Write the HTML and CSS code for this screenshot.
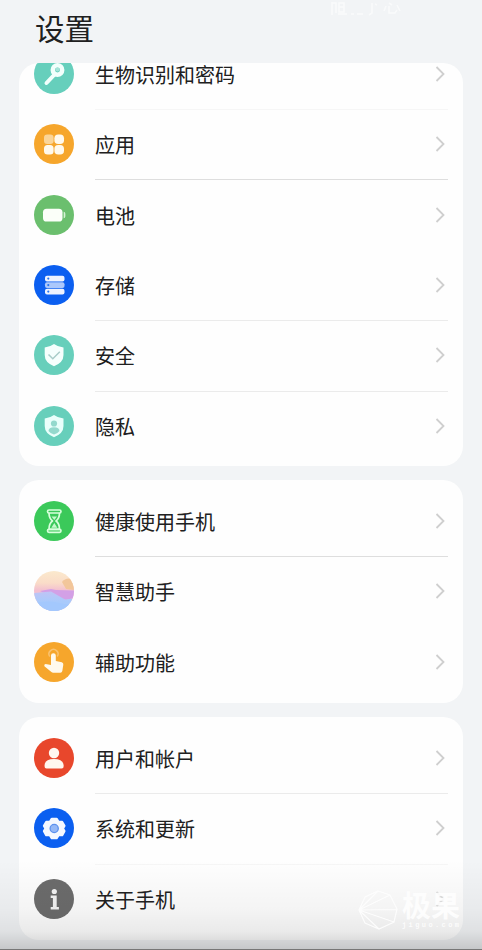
FILE: index.html
```html
<!DOCTYPE html>
<html lang="zh-CN">
<head>
<meta charset="utf-8">
<title>设置</title>
<link rel="stylesheet" href="styles.css">
</head>
<body>
<div class="screen">
  <svg class="status" viewBox="0 0 72 16" fill="none" stroke="#fff" stroke-width="1.6"><path d="M2 2v13M2 3h4v10M9 3h5v9H9zM9 7h5M8 14h9M21 14h3M27 14h6M42 3v10l-3 2M45 4l2 1M56 6l-2 5M59 3l3 2M59 6v7h6l2-3M67 5l3 6"/></svg>
  <h1 class="title">设置</h1>
  <main class="list">
    <section class="card card-clipped">
      <div class="row">
        <svg class="icon" viewBox="0 0 40 40"><circle cx="20" cy="20" r="20" fill="#66cfbc"/><path d="M21 20L12.500 29" stroke="#f2fffc" stroke-width="4" stroke-linecap="round"/><circle cx="23.500" cy="16" r="4.700" fill="#66cfbc" stroke="#f2fffc" stroke-width="4.500"/><circle cx="23.500" cy="15.500" r="2" fill="#a5e3d8"/></svg>
        <div class="body line-faint"><span>生物识别和密码</span><svg class="chevron" viewBox="0 0 10 18"><path d="M1.500 2L8.500 9L1.500 16"/></svg></div>
      </div>
      <div class="row">
        <svg class="icon" viewBox="0 0 40 40"><circle cx="20" cy="20" r="20" fill="#f6a62c"/><rect x="10" y="10.500" width="9.600" height="9.500" rx="3.300" fill="#fbd598"/><g fill="#fff9ed"><rect x="20.400" y="10.500" width="9.600" height="9.500" rx="3.800"/><rect x="10" y="21" width="9.600" height="9.500" rx="3.500"/><rect x="20.400" y="21" width="9.600" height="9.500" rx="3.800"/></g></svg>
        <div class="body line-strong"><span>应用</span><svg class="chevron" viewBox="0 0 10 18"><path d="M1.500 2L8.500 9L1.500 16"/></svg></div>
      </div>
      <div class="row">
        <svg class="icon" viewBox="0 0 40 40"><circle cx="20" cy="20" r="20" fill="#6bbf6e"/><rect x="9" y="13.700" width="19.500" height="12.800" rx="3.600" fill="#fbfff9"/><path d="M29.700 16.800q1.700 0 1.700 3.200t-1.700 3.200z" fill="#d5f2d5"/></svg>
        <div class="body"><span>电池</span><svg class="chevron" viewBox="0 0 10 18"><path d="M1.500 2L8.500 9L1.500 16"/></svg></div>
      </div>
      <div class="row">
        <svg class="icon" viewBox="0 0 40 40"><circle cx="20" cy="20" r="20" fill="#0b5ff0"/><g fill="#edf3ff"><rect x="11" y="10.700" width="19.500" height="5.800" rx="2"/><rect x="11" y="23.700" width="19.500" height="5.800" rx="2"/></g><rect x="11" y="17.200" width="19.500" height="5.800" rx="2" fill="#abc8fb"/><g fill="#2875ef"><circle cx="14.300" cy="13.600" r="1.100"/><circle cx="14.300" cy="20.100" r="1.100"/><circle cx="14.300" cy="26.600" r="1.100"/></g></svg>
        <div class="body line"><span>存储</span><svg class="chevron" viewBox="0 0 10 18"><path d="M1.500 2L8.500 9L1.500 16"/></svg></div>
      </div>
      <div class="row">
        <svg class="icon" viewBox="0 0 40 40"><circle cx="20" cy="20" r="20" fill="#67cfbb"/><path d="M20 9q4 3 9.500 3.500V20q0 7.500-9.500 11.200Q10.700 27.500 10.700 20v-7.500Q16 12 20 9z" fill="#f5fffd"/><path d="M14.500 19.500l4.300 4.300 7-7" fill="none" stroke="#a9cdc9" stroke-width="1.500"/></svg>
        <div class="body line"><span>安全</span><svg class="chevron" viewBox="0 0 10 18"><path d="M1.500 2L8.500 9L1.500 16"/></svg></div>
      </div>
      <div class="row">
        <svg class="icon" viewBox="0 0 40 40"><circle cx="20" cy="20" r="20" fill="#67cfbb"/><path d="M20 9q4 3 9.500 3.500V20q0 7.500-9.500 11.200Q10.700 27.500 10.700 20v-7.500Q16 12 20 9z" fill="#e9fffb"/><circle cx="20" cy="17.500" r="3.100" fill="#94d9cd"/><path d="M14.500 25q0-3.800 5.500-3.800t5.500 3.800q-2 2.800-5.500 3.500-3.500-.7-5.500-3.500z" fill="#94d9cd"/></svg>
        <div class="body"><span>隐私</span><svg class="chevron" viewBox="0 0 10 18"><path d="M1.500 2L8.500 9L1.500 16"/></svg></div>
      </div>
    </section>

    <section class="card">
      <div class="row">
        <svg class="icon" viewBox="0 0 40 40"><circle cx="20" cy="20" r="20" fill="#3bc95a"/><g fill="none" stroke="#d8ffdc" stroke-width="1.700" stroke-linejoin="round"><rect x="13.500" y="9" width="13.500" height="3" rx="1.500"/><rect x="13.500" y="28.300" width="13.500" height="3" rx="1.500"/><path d="M15 12q0 5.500 3.500 8-3.500 2.500-3.500 8.300h10.500q0-5.800-3.500-8.300 3.500-2.500 3.500-8"/></g><path d="M17.500 15.500h5.500L20.300 19zM20.300 22l3 4.800h-6z" fill="#c6f7cc"/></svg>
        <div class="body line-strong"><span>健康使用手机</span><svg class="chevron" viewBox="0 0 10 18"><path d="M1.500 2L8.500 9L1.500 16"/></svg></div>
      </div>
      <div class="row">
        <svg class="icon" viewBox="0 0 40 40"><defs><clipPath id="orb"><circle cx="20" cy="20" r="20"/></clipPath><linearGradient id="sky" x2="0" y2="1"><stop stop-color="#fbe9cd"/><stop offset=".3" stop-color="#fadcc8"/><stop offset=".48" stop-color="#f3c0d0"/></linearGradient><linearGradient id="sea" x2="0" y2="1"><stop stop-color="#c0c4f5"/><stop offset=".5" stop-color="#a9cafb"/></linearGradient></defs><g clip-path="url(#orb)"><path fill="url(#sky)" d="M0 0h40v40H0z"/><path d="M28 11q3-5 12-3v11l-8-1z" fill="#f2c69a"/><path d="M6 20l11-2 5 1 18 .5V27l-8 2-18-5z" fill="#d3a0e6"/><path d="M0 22l17-1.500 7 4 7 4 9-1v13H0z" fill="url(#sea)"/><path d="M0 32q16-3 26 0t14-1v9H0z" fill="#a3c8fd"/></g></svg>
        <div class="body"><span>智慧助手</span><svg class="chevron" viewBox="0 0 10 18"><path d="M1.500 2L8.500 9L1.500 16"/></svg></div>
      </div>
      <div class="row">
        <svg class="icon" viewBox="0 0 40 40"><circle cx="20" cy="20" r="20" fill="#f6a62c"/><path d="M15.800 14.500a4.500 4.500 0 1 1 7.400 0" fill="none" stroke="#f9c270" stroke-width="1.500"/><path d="M17 13.500q0-2.300 2.400-2.300t2.400 2.300v5.500l6 1.200q1.800.5 1.500 2.500l-1 6.300q-.3 1.800-2 1.800h-7q-1.300 0-2.200-1l-6.700-5.500q-.8-1.800 1.200-2.200l5.400 1z" fill="#fff9ec"/></svg>
        <div class="body"><span>辅助功能</span><svg class="chevron" viewBox="0 0 10 18"><path d="M1.500 2L8.500 9L1.500 16"/></svg></div>
      </div>
    </section>

    <section class="card">
      <div class="row">
        <svg class="icon" viewBox="0 0 40 40"><circle cx="20" cy="20" r="20" fill="#e8472c"/><g fill="#fff7ef"><circle cx="20" cy="15" r="5.200"/><path d="M10.500 28q0-7 9.500-7t9.700 7q0 2.500-2 2.500H12.500q-2 0-2-2.500z"/></g></svg>
        <div class="body line"><span>用户和帐户</span><svg class="chevron" viewBox="0 0 10 18"><path d="M1.500 2L8.500 9L1.500 16"/></svg></div>
      </div>
      <div class="row">
        <svg class="icon" viewBox="0 0 40 40"><circle cx="20" cy="20" r="20" fill="#0b5ff0"/><path d="M17.800 11h4.800l1.800 2.900 3.700.1 2.200 3.900-1.500 2.600 1.500 2.700-2.200 3.800-3.600.1-1.900 2.900h-4.800l-1.900-2.900-3.600-.1-2.200-3.800 1.500-2.700-1.500-2.600 2.200-3.900 3.700-.1z" fill="#f4f8ff" stroke="#f4f8ff" stroke-width="2.500" stroke-linejoin="round"/><circle cx="20.200" cy="20.500" r="4.100" fill="#94b8f7" stroke="#5c91ee" stroke-width="1.300"/></svg>
        <div class="body line-faint"><span>系统和更新</span><svg class="chevron" viewBox="0 0 10 18"><path d="M1.500 2L8.500 9L1.500 16"/></svg></div>
      </div>
      <div class="row">
        <svg class="icon" viewBox="0 0 40 40"><circle cx="20" cy="20" r="20" fill="#6c6c6c"/><g fill="#f4f4f4"><circle cx="20.300" cy="12.500" r="2.600"/><path d="M16.700 16.500h6v11.500h2.200v2.500h-8.200v-2.500h2.200v-9h-2.200z"/></g></svg>
        <div class="body"><span>关于手机</span><svg class="chevron chevron-under" viewBox="0 0 10 18"><path d="M1.500 2L8.500 9L1.500 16"/></svg></div>
      </div>
    </section>
  </main>
  <div class="shade"></div>
  <div class="watermark">
    <svg class="mark" viewBox="0 0 40 40" fill="none" stroke="#fff" stroke-width="1.200"><path d="M20 1L32 5l7 14-3 13-15 7-14-6-6-13L7 7zM1 20L20 1M1 20L32 5M1 20l38-.5M1 20l35 12M1 20l20 19"/></svg>
    <div class="brand"><span class="brand-name">极果</span><span class="brand-url">jiguo.com</span></div>
  </div>
</div>
</body>
</html>
```
FILE: styles.css
```css
* { box-sizing: border-box; }

body {
  margin: 0;
  background: #f2f4f6;
  color: #202020;
  font-family: "Noto Sans CJK SC", sans-serif;
}

.screen {
  position: relative;
  height: 950px;
  padding: 7px 19px 0;
  overflow: hidden;
}

.status {
  position: absolute;
  left: 330px;
  top: 0;
  width: 72px;
  height: 16px;
  opacity: 0.6;
}

.title {
  height: 56px;
  margin: 0 0 0 16px;
  font-size: 29.5px;
  line-height: 40px;
  font-weight: 400;
}

.list {
  display: flex;
  flex-direction: column;
  gap: 14px;
}

.card {
  display: flex;
  flex-direction: column;
  justify-content: center;
  height: 223px;
  border-radius: 20px;
  background: #fefefe;
}

.card-clipped {
  justify-content: flex-end;
  height: 403px;
  padding-bottom: 5px;
  overflow: hidden;
}

.row {
  display: flex;
  flex: none;
  gap: 21px;
  align-items: center;
  height: 70.4px;
  padding: 0 15px;
}

.icon {
  flex: none;
  width: 40px;
  height: 40px;
}

.body {
  display: flex;
  flex: 1;
  align-items: center;
  justify-content: space-between;
  height: 71.4px;
  margin: 0 0 -1px;
  padding-top: 2px;
  border-bottom: 1px solid transparent;
  font-size: 20px;
  line-height: 30px;
}

.line { border-color: #ebebeb; }
.line-strong { border-color: #dedede; }
.line-faint { border-color: #f6f6f6; }

.chevron {
  width: 10px;
  height: 18px;
  margin: -2px 3px 0 0;
  fill: none;
  stroke: #cfcfcf;
  stroke-width: 1.8;
}

.chevron-under { opacity: 0.6; }

.shade {
  position: absolute;
  inset: auto 0 0;
  height: 90px;
  border-bottom: 1px solid #777;
  background: linear-gradient(rgba(0, 0, 0, 0), rgba(0, 0, 0, 0.04) 55%, rgba(0, 0, 0, 0.08) 80%, rgba(0, 0, 0, 0.18));
}

.watermark {
  position: absolute;
  left: 358px;
  top: 890px;
  display: flex;
  gap: 4px;
  align-items: flex-start;
  color: #fff;
  opacity: 0.85;
}

.mark {
  width: 40px;
  height: 40px;
}

.brand {
  display: flex;
  flex-direction: column;
}

.brand-name {
  margin-top: -1px;
  font-size: 29px;
  line-height: 30px;
  font-weight: 700;
}

.brand-url {
  margin-top: 2px;
  font: 700 7px/8px "Liberation Mono", monospace;
  letter-spacing: 2.4px;
}
```
